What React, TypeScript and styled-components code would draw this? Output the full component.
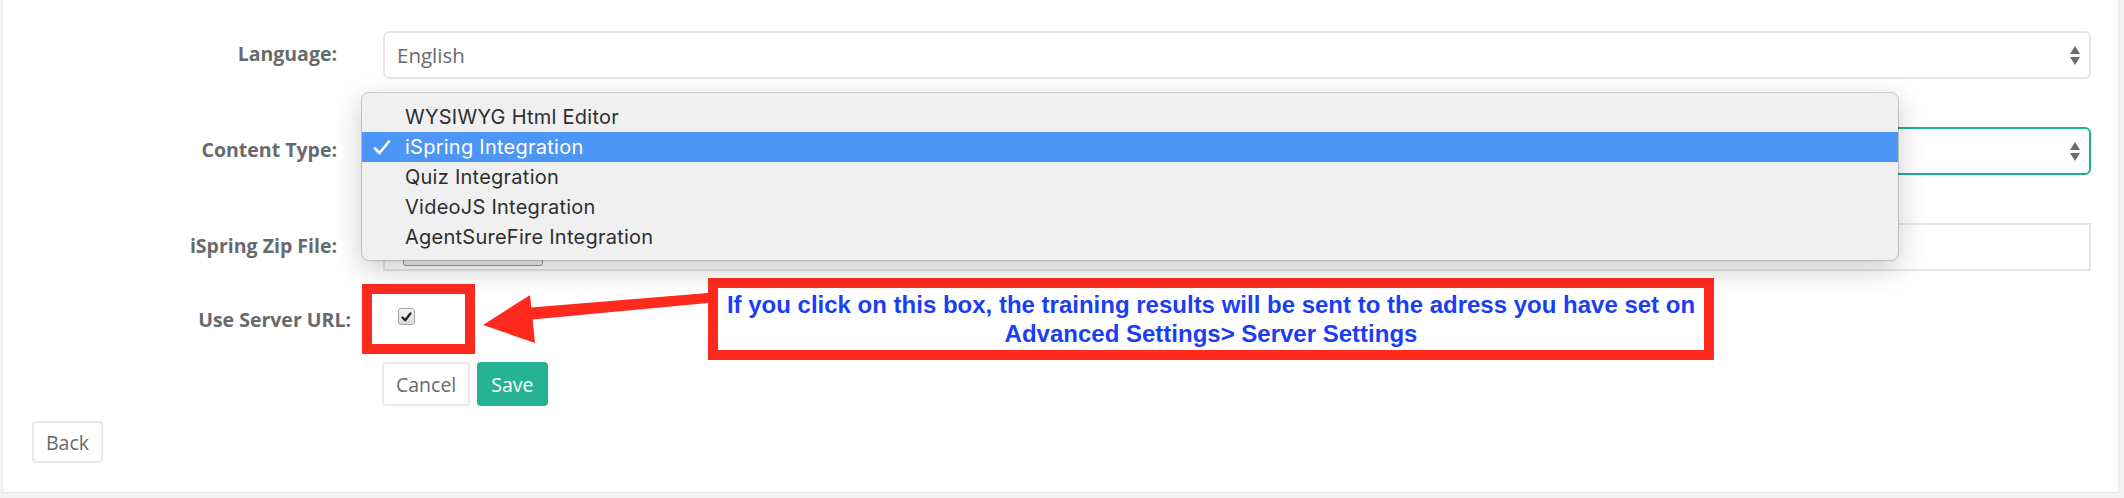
import React from 'react';
import styled, { createGlobalStyle } from 'styled-components';

const GlobalStyle = createGlobalStyle`
  html, body {
    margin: 0;
    padding: 0;
    background: #f3f3f4;
  }
  body {
    font-family: "Open Sans", "Liberation Sans", sans-serif;
    color: #676a6c;
  }
`;

const Page = styled.div`
  width: 2124px;
  height: 498px;
  box-sizing: border-box;
  padding: 0 5px 5px 2px;
  overflow: hidden;
`;

const Panel = styled.div`
  height: 100%;
  box-sizing: border-box;
  background: #fff;
  border: 1px solid #e7eaec;
  border-top: none;
  padding-top: 31px;
  display: flex;
  flex-direction: column;
`;

const FormGrid = styled.div`
  display: grid;
  grid-template-columns: 334px 1fr;
  column-gap: 46px;
  row-gap: 48px;
  padding-right: 27px;
`;

const Label = styled.label`
  font-size: 19.5px;
  font-weight: 700;
  color: #676a6c;
  text-align: right;
  align-self: center;
  padding-bottom: 4px;
`;

const Field = styled.div`
  position: relative;
  height: 48px;
`;

const SelectBox = styled.div<{ $focused?: boolean }>`
  height: 48px;
  box-sizing: border-box;
  border: 2px solid ${({ $focused }) => ($focused ? '#1ab394' : '#e5e6e7')};
  border-radius: 6px;
  background: #fff;
  display: flex;
  align-items: center;
  justify-content: space-between;
  padding: 0 9px 0 12px;
  font-size: 20.5px;
  color: #676a6c;
`;

const Arrows = styled.svg`
  width: 10px;
  height: 19px;
  flex-shrink: 0;
`;

const FileBox = styled.div`
  height: 48px;
  box-sizing: border-box;
  border: 2px solid #e5e6e7;
  display: flex;
  align-items: center;
  padding-left: 18px;
`;

const ChooseButton = styled.span`
  width: 140px;
  height: 32px;
  box-sizing: border-box;
  border: 1px solid #9a9a9a;
  border-radius: 3px;
  background: #efefef;
  margin-top: 6px;
`;

/* native macOS popup for the Content Type select */
const Menu = styled.div`
  position: absolute;
  left: -21px;
  top: -34px;
  width: 1536px;
  box-sizing: border-box;
  padding: 9px 0 8px;
  background: #f0f0f0;
  border-radius: 7px;
  box-shadow: 0 0 0 1px rgba(0, 0, 0, 0.16), 0 8px 28px rgba(0, 0, 0, 0.22);
  font-family: Inter, "Liberation Sans", sans-serif;
  z-index: 5;
`;

const MenuItem = styled.div<{ $selected?: boolean }>`
  height: 30px;
  display: flex;
  align-items: center;
  font-size: 20px;
  letter-spacing: 0.25px;
  color: ${({ $selected }) => ($selected ? '#fff' : '#2e2e2e')};
  background: ${({ $selected }) => ($selected ? '#4d96f5' : 'transparent')};
`;

const CheckSlot = styled.span`
  width: 43px;
  display: flex;
  justify-content: flex-start;
  padding-left: 11px;
  box-sizing: border-box;
`;

const ServerRow = styled.div`
  display: flex;
  align-items: center;
  height: 82px;
  margin-top: 7px;
`;

const ServerLabel = styled(Label)`
  width: 348px;
  padding-bottom: 0;
  flex-shrink: 0;
`;

const RedFrame = styled.div`
  width: 113px;
  height: 70px;
  box-sizing: border-box;
  border: 10px solid #ff2a1e;
  margin-left: 11px;
  padding: 14px 0 0 26px;
  flex-shrink: 0;
`;

const Checkbox = styled.span`
  width: 17px;
  height: 17px;
  box-sizing: border-box;
  border: 1px solid #a6a6a6;
  border-radius: 3px;
  background: linear-gradient(#f6f6f6, #d9d9d9);
  display: flex;
  align-items: center;
  justify-content: center;
`;

const ArrowSvg = styled.svg`
  width: 233px;
  height: 82px;
  flex-shrink: 0;
`;

const Callout = styled.div`
  width: 1006px;
  height: 82px;
  box-sizing: border-box;
  border: 10px solid #ff2a1e;
  padding-top: 2px;
  background: #fff;
  text-align: center;
  font-family: "Liberation Sans", Arial, sans-serif;
  font-weight: 700;
  font-size: 24px;
  line-height: 29px;
  color: #1a3ef5;
  flex-shrink: 0;
`;

const Actions = styled.div`
  display: flex;
  gap: 7px;
  margin: 2px 0 0 379px;
`;

const Button = styled.button<{ $primary?: boolean }>`
  height: 44px;
  box-sizing: border-box;
  padding: 0 12px;
  border-radius: 4px;
  border: 2px solid ${({ $primary }) => ($primary ? '#26b393' : '#e7eaec')};
  background: ${({ $primary }) => ($primary ? '#26b393' : '#fff')};
  color: ${({ $primary }) => ($primary ? '#fff' : '#676a6c')};
  font-family: "Open Sans", "Liberation Sans", sans-serif;
  font-size: 19.5px;
  cursor: pointer;
`;

const BackButton = styled(Button)`
  align-self: flex-start;
  height: 42px;
  margin: 15px 0 0 29px;
`;

function SelectArrows() {
  return (
    <Arrows viewBox="0 0 10 19">
      <path d="M5 0 L10 8 L0 8 Z" fill="#6b6b6b" />
      <path d="M0 11 L10 11 L5 19 Z" fill="#6b6b6b" />
    </Arrows>
  );
}

const options = [
  'WYSIWYG Html Editor',
  'iSpring Integration',
  'Quiz Integration',
  'VideoJS Integration',
  'AgentSureFire Integration',
];

export default function App() {
  const selected = 1;

  return (
    <>
      <GlobalStyle />
      <Page>
        <Panel>
          <FormGrid>
            <Label>Language:</Label>
            <Field>
              <SelectBox>
                <span>English</span>
                <SelectArrows />
              </SelectBox>
            </Field>

            <Label>Content Type:</Label>
            <Field>
              {/* the chosen value sits under the open popup */}
              <SelectBox $focused>
                <span />
                <SelectArrows />
              </SelectBox>
              <Menu>
                {options.map((opt, idx) => (
                  <MenuItem key={opt} $selected={idx === selected}>
                    <CheckSlot>
                      {idx === selected && (
                        <svg width="18" height="15" viewBox="0 0 18 15">
                          <path
                            d="M2 8.5 L6.5 13 L16 1.5"
                            fill="none"
                            stroke="#fff"
                            strokeWidth="2.6"
                            strokeLinecap="round"
                            strokeLinejoin="round"
                          />
                        </svg>
                      )}
                    </CheckSlot>
                    {opt}
                  </MenuItem>
                ))}
              </Menu>
            </Field>

            <Label>iSpring Zip File:</Label>
            <Field>
              <FileBox>
                <ChooseButton />
              </FileBox>
            </Field>
          </FormGrid>

          <ServerRow>
            <ServerLabel>Use Server URL:</ServerLabel>
            <RedFrame>
              <Checkbox>
                <svg width="11" height="10" viewBox="0 0 11 10">
                  <path
                    d="M1.5 5.5 L4.2 8.3 L9.5 1.5"
                    fill="none"
                    stroke="#1e1e1e"
                    strokeWidth="2.2"
                    strokeLinecap="round"
                    strokeLinejoin="round"
                  />
                </svg>
              </Checkbox>
            </RedFrame>
            <ArrowSvg viewBox="0 0 233 82">
              <polygon points="50,30 233,15 233,25 52,42" fill="#ff2a1e" />
              <polygon points="8,47 55,17 60,65" fill="#ff2a1e" />
            </ArrowSvg>
            <Callout>
              If you click on this box, the training results will be sent to the adress you have set on
              <br />
              Advanced Settings&gt; Server Settings
            </Callout>
          </ServerRow>

          <Actions>
            <Button>Cancel</Button>
            <Button $primary>Save</Button>
          </Actions>

          <BackButton>Back</BackButton>
        </Panel>
      </Page>
    </>
  );
}
